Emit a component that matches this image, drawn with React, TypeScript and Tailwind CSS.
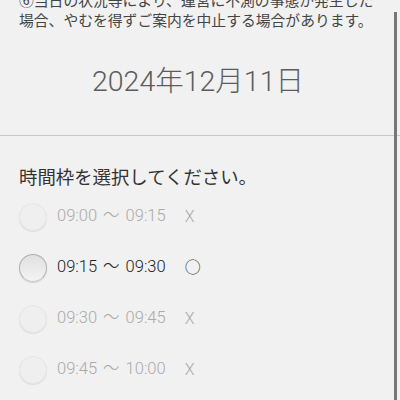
import React from 'react';

interface Slot {
  from: string;
  to: string;
  available: boolean;
}

const slots: Slot[] = [
  { from: '09:00', to: '09:15', available: false },
  { from: '09:15', to: '09:30', available: true },
  { from: '09:30', to: '09:45', available: false },
  { from: '09:45', to: '10:00', available: false },
];

const latin = { fontFamily: 'Roboto, "Noto Sans CJK JP", sans-serif' };

const Radio: React.FC<{ disabled: boolean }> = ({ disabled }) => (
  <span
    className={`block w-[28px] h-[28px] rounded-full shrink-0 border ${
      disabled
        ? 'border-[#e6e6e6] bg-[#efefef] shadow-[0_1px_1px_rgba(0,0,0,0.08)]'
        : 'border-[#b0b0b0] border-b-[#c8c8c8] bg-gradient-to-b from-[#e0e0e0] to-[#f4f4f4] shadow-[0_1px_1px_rgba(0,0,0,0.12)]'
    }`}
  />
);

export default function App() {
  return (
    <div
      className="relative w-[400px] h-[400px] overflow-hidden bg-[#f1f1f1]"
      style={{ fontFamily: '"Noto Sans CJK JP", "Noto Sans", sans-serif' }}
    >
      {/* scrollbar */}
      <div className="absolute right-[3px] top-[12px] w-[3px] h-[400px] bg-[#777] z-10" />

      <div className="mt-[-10px] px-[19px] text-[14.8px] leading-[20px] text-[#444] whitespace-nowrap">
        <p>⑥当日の状況等により、運営に不測の事態が発生した</p>
        <p>場合、やむを得ずご案内を中止する場合があります。</p>
      </div>

      <div className="h-[105px] flex items-center justify-center pr-[4px]">
        <span className="text-[28.5px] font-light text-[#5c5c5c]" style={latin}>
          2024年12月11日
        </span>
      </div>

      <div className="h-px bg-[#c6c6c6]" />

      <div className="px-[19px] pt-[27px]">
        <p className="text-[18.4px] leading-[26px] text-[#333]">時間枠を選択してください。</p>
        <div className="mt-[2px] flex flex-col">
          {slots.map((s) => {
            const color = s.available ? 'text-[#222]' : 'text-[#aaa]';
            return (
              <div key={s.from} className="h-[51px] flex items-center gap-[10px]">
                <Radio disabled={!s.available} />
                <span className={`flex items-center text-[16.5px] font-light ${color}`} style={latin}>
                  <span>{s.from}</span>
                  <span className="mx-[6px]">〜</span>
                  <span>{s.to}</span>
                </span>
                <span className={`ml-[9px] text-[16px] font-light ${color}`} style={latin}>
                  {s.available ? '○' : 'X'}
                </span>
              </div>
            );
          })}
        </div>
      </div>
    </div>
  );
}
